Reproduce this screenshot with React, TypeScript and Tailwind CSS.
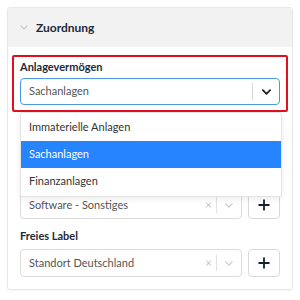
import React from "react";

const font = { fontFamily: "Lato, 'Noto Sans', sans-serif" };

function Chevron({ className }: { className?: string }) {
  return (
    <svg viewBox="0 0 10 6" className={className} fill="none" stroke="currentColor" strokeLinecap="round" strokeLinejoin="round">
      <path d="M1 1l4 4 4-4" />
    </svg>
  );
}

function Plus() {
  return (
    <button className="flex h-[28px] w-[32px] shrink-0 items-center justify-center rounded-[4px] border border-[#d9d9d9] bg-white">
      <svg viewBox="0 0 12 12" className="h-[12px] w-[12px]" stroke="#14202e" strokeWidth="1.8">
        <path d="M6 0.5v11M0.5 6h11" />
      </svg>
    </button>
  );
}

function ClearableSelect({ value }: { value: string }) {
  return (
    <div className="flex gap-[6px]">
      <div className="flex h-[28px] flex-1 items-center rounded-[4px] border border-[#dcdcdc] bg-white">
        <span className="flex-1 pl-[8px] text-[11px] text-[#555]">{value}</span>
        <span className="px-[4px] text-[12px] leading-none text-[#c4c4c4]">×</span>
        <span className="h-[16px] w-px bg-[#e2e2e2]" />
        <span className="flex w-[24px] justify-center text-[#c8c8c8]">
          <Chevron className="h-[5px] w-[8px] stroke-[1.5]" />
        </span>
      </div>
      <Plus />
    </div>
  );
}

export default function App() {
  const options = ["Immaterielle Anlagen", "Sachanlagen", "Finanzanlagen"];
  return (
    <div className="h-[300px] w-[300px] bg-white pl-[7px] pt-[7px]" style={font}>
      <div className="flex h-[283px] w-[286px] flex-col overflow-hidden rounded-[3px] border border-[#e8e8e8] shadow-[0_1px_2px_rgba(0,0,0,0.05)]">
        <div className="flex h-[39px] shrink-0 items-center gap-[8px] bg-[#f2f2f2] pl-[12px]">
          <Chevron className="h-[5px] w-[8px] stroke-[1.3] text-[#c4c4c4]" />
          <span className="text-[12px] font-bold text-[#1c2a3b]">Zuordnung</span>
        </div>

        <div className="relative flex flex-col px-[4px] pt-[8px]">
          <div className="relative rounded-[2px] border-2 border-[#e0101e] px-[6px] pb-[5px] pt-[2px]">
            <div className="h-[15px] text-[11px] font-bold leading-[15px] text-[#1c2a3b]">Anlagevermögen</div>
            <div className="mt-[4px] flex h-[27px] items-center rounded-[4px] border border-[#4a9be0] bg-white">
              <span className="flex-1 pl-[8px] text-[11px] text-[#555]">Sachanlagen</span>
              <span className="h-[17px] w-px bg-[#d8d8d8]" />
              <span className="flex w-[26px] justify-center text-[#222]">
                <Chevron className="h-[6px] w-[9px] stroke-[2]" />
              </span>
            </div>
            <div className="absolute left-[6px] right-[4px] top-[55px] z-10 rounded-[3px] border border-[#e4e4e4] bg-white py-[1px] shadow-[0_2px_6px_rgba(0,0,0,0.08)]">
              {options.map((o) => (
                <div
                  key={o}
                  className={
                    o === "Sachanlagen"
                      ? "flex h-[27px] items-center bg-[#2684ff] pl-[8px] text-[11px] text-white"
                      : "flex h-[27px] items-center pl-[8px] text-[11px] text-[#333]"
                  }
                >
                  {o}
                </div>
              ))}
            </div>
          </div>

          <div className="px-[8px]">
            <div className="mt-[79px]">
              <ClearableSelect value="Software - Sonstiges" />
            </div>
            <div className="mt-[9px] h-[15px] text-[11px] font-bold leading-[15px] text-[#1c2a3b]">Freies Label</div>
            <div className="mt-[6px]">
              <ClearableSelect value="Standort Deutschland" />
            </div>
          </div>
        </div>
      </div>
    </div>
  );
}
